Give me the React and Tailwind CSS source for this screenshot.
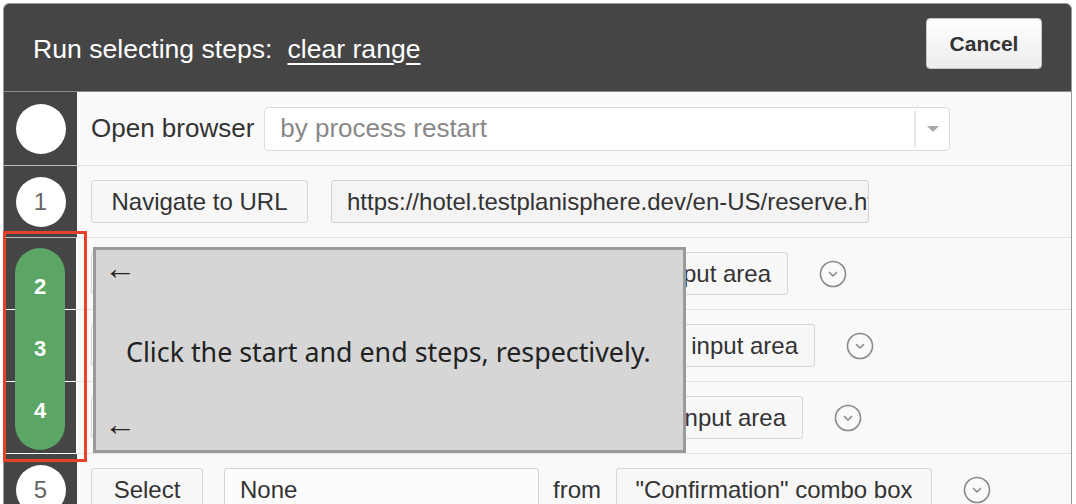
import React from 'react';

const ChevronCircle = () => (
  <svg className="w-[28px] h-[28px] shrink-0" viewBox="0 0 28 28" fill="none" stroke="#8a8a8a">
    <circle cx="14" cy="14" r="12.5" strokeWidth="1.6" />
    <path d="M10.5 12.5l3.5 3.5 3.5-3.5" strokeWidth="1.6" strokeLinecap="round" strokeLinejoin="round" />
  </svg>
);

const StepCell = ({ children, selected, first }) => (
  <div
    className={
      'w-[73px] shrink-0 flex items-center justify-center bg-[#454545] ' +
      (selected ? 'border-r border-b border-white' : 'border-b border-[#bdbdbd]')
    }
  >
    {!selected && (
      <div className="w-[50px] h-[50px] rounded-full bg-white flex items-center justify-center text-[24px] text-[#666]">
        {first ? '' : children}
      </div>
    )}
  </div>
);

const Btn = ({ children, className = '' }) => (
  <div
    className={
      'h-[43px] shrink-0 flex items-center justify-center rounded-[3px] border border-[#d6d6d6] bg-[#f7f7f7] text-[24px] text-[#333] whitespace-nowrap overflow-hidden ' +
      className
    }
  >
    {children}
  </div>
);

const Field = ({ children, className = '' }) => (
  <div
    className={
      'h-[43px] shrink-0 flex items-center px-[15px] rounded-[3px] border border-[#d2d2d2] text-[24px] text-[#333] whitespace-nowrap overflow-hidden ' +
      className
    }
  >
    {children}
  </div>
);

const Row = ({ num, selected, first, h = 'h-[72px]', children }) => (
  <div className={'flex ' + h}>
    <StepCell selected={selected} first={first}>{num}</StepCell>
    <div className="flex-1 flex items-center pl-[14px] bg-[#f9f9f9] border-b border-[#e2e2e2] overflow-hidden">
      {children}
    </div>
  </div>
);

const midRows = [
  { num: 2, action: 'Input', value: '2024/07/01', target: '"Check-in date" input area', w: 'w-[256px]' },
  { num: 3, action: 'Input', value: '2', target: '"Stay duration" input area', w: 'w-[283px]' },
  { num: 4, action: 'Input', value: '1', target: '"Number of guests" input area', w: 'w-[271px]' },
];

export default function App() {
  return (
    <div className="relative w-[1076px] h-[504px] overflow-hidden bg-white font-['Liberation_Sans',Arial,sans-serif]">
      <div className="ml-[3px] mt-[3px] w-[1069px] rounded-t-[6px] border border-[#9a9a9a] overflow-hidden">
        <header className="h-[88px] bg-[#454545] border-b border-[#8c8c8c] flex items-start justify-between pl-[29px] pr-[29px]">
          <h1 className="mt-[29px] text-[26.6px] leading-[32px] text-white">
            Run selecting steps:
            <span className="ml-[15px] underline underline-offset-[5px] decoration-[2px]">clear range</span>
          </h1>
          <button className="mt-[14px] w-[116px] h-[51px] rounded-[4px] border border-[#c8c8c8] bg-gradient-to-b from-white to-[#ececec] text-[21px] font-bold text-[#333]">
            Cancel
          </button>
        </header>

        <Row first h="h-[74px]">
          <span className="text-[26px] text-[#333] mr-[10px]">Open browser</span>
          <div className="w-[686px] h-[44px] flex items-center rounded-[4px] border border-[#dcdcdc] bg-white">
            <span className="flex-1 pl-[15px] text-[26px] text-[#888]">by process restart</span>
            <div className="w-[35px] h-[36px] border-l-2 border-[#e4e4e4] flex items-center justify-center">
              <span className="w-0 h-0 border-l-[6px] border-r-[6px] border-t-[6px] border-l-transparent border-r-transparent border-t-[#aaa]" />
            </div>
          </div>
        </Row>

        <Row num={1}>
          <Btn className="w-[217px]">Navigate to URL</Btn>
          <Field className="ml-[23px] w-[538px] bg-[#f4f4f4] text-[23.5px]">
            https://hotel.testplanisphere.dev/en-US/reserve.html
          </Field>
        </Row>

        {midRows.map((r) => (
          <Row key={r.num} num={r.num} selected>
            <Btn className="w-[112px]">{r.action}</Btn>
            <Field className="ml-[21px] w-[260px] bg-white">{r.value}</Field>
            <span className="ml-[14px] text-[24px] text-[#333]">to</span>
            <Btn className={'ml-[14px] justify-end pr-[16px] ' + r.w}>{r.target}</Btn>
            <div className="ml-[31px]">
              <ChevronCircle />
            </div>
          </Row>
        ))}

        <Row num={5}>
          <Btn className="w-[112px]">Select</Btn>
          <Field className="ml-[21px] w-[315px] bg-[#fcfcfc]">None</Field>
          <span className="ml-[14px] text-[24px] text-[#333]">from</span>
          <Btn className="ml-[15px] w-[316px]">"Confirmation" combo box</Btn>
          <div className="ml-[31px]">
            <ChevronCircle />
          </div>
        </Row>
      </div>

      {/* selected range pill */}
      <div className="absolute left-[15px] top-[248px] w-[50px] h-[202px] rounded-full bg-[#5ba664] flex flex-col justify-between items-center py-[26px] text-white text-[22px] font-bold leading-[26px]">
        <span>2</span>
        <span>3</span>
        <span>4</span>
      </div>

      {/* highlight frame */}
      <div className="absolute left-[3px] top-[231px] w-[84px] h-[231px] border-[3px] border-[#e8412b]" />

      {/* hint box */}
      <div className="absolute left-[93px] top-[247px] w-[593px] h-[206px] border-[3px] border-[#9a9a9a] bg-[#d6d6d6] font-['Noto_Sans',sans-serif] text-[#222]">
        <div className="flex flex-col h-full pl-[8px] pr-[20px] pt-0 pb-[10px]">
          <span className="text-[32px] leading-[34px]">←</span>
          <div className="flex-1 flex items-center pl-[22px] pt-[14px] text-[26.8px]">
            Click the start and end steps, respectively.
          </div>
          <span className="text-[32px] leading-[34px]">←</span>
        </div>
      </div>
    </div>
  );
}
